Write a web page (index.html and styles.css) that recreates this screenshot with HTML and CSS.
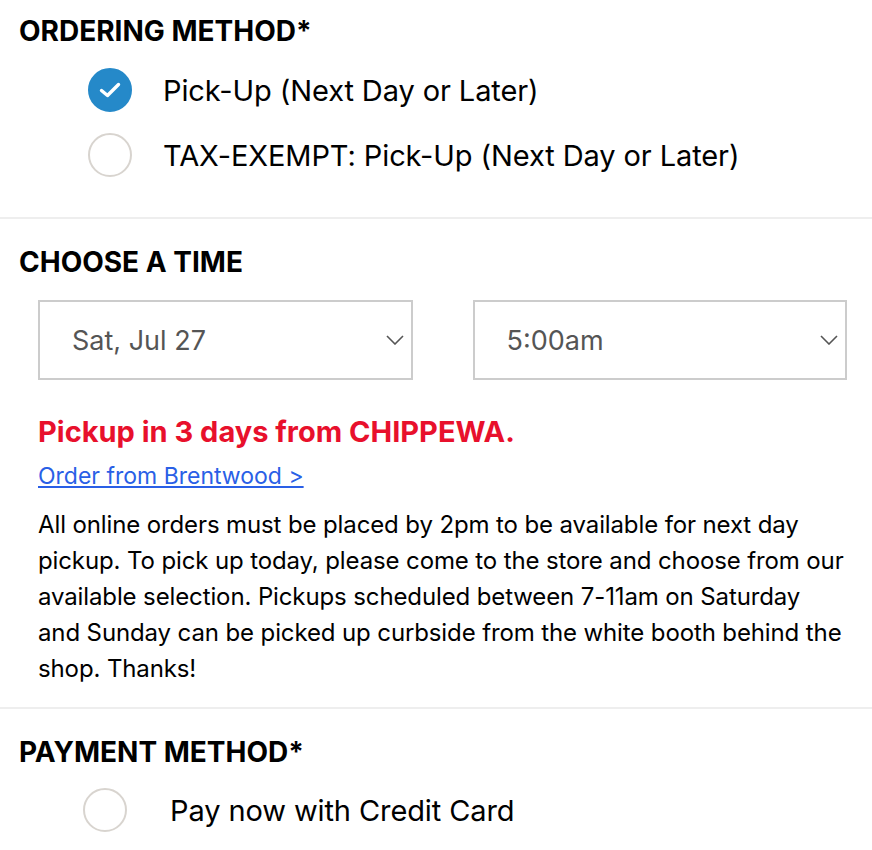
FILE: index.html
```html
<!DOCTYPE html>
<html lang="en">
<head>
    <meta charset="UTF-8">
    <meta name="viewport" content="width=device-width, initial-scale=1.0">
    <title>Checkout</title>
    <link rel="stylesheet" href="styles.css">
</head>
<body>
    <!-- طريقة الطلب -->
    <section class="block first">
        <h2 class="block-title">ORDERING METHOD*</h2>
        <div class="options">
            <label class="option">
                <span class="radio checked">
                    <svg width="22" height="16" viewBox="0 0 22 16"><path d="M2.5 8.5 L8.5 13.5 L19.5 2.5" fill="none" stroke="#fff" stroke-width="3.4" stroke-linecap="round" stroke-linejoin="round"/></svg>
                </span>
                <span class="option-text">Pick-Up (Next Day or Later)</span>
            </label>
            <label class="option">
                <span class="radio"></span>
                <span class="option-text">TAX-EXEMPT: Pick-Up (Next Day or Later)</span>
            </label>
        </div>
    </section>

    <section class="block">
        <h2 class="block-title">CHOOSE A TIME</h2>
        <div class="selects">
            <div class="select">
                <span>Sat, Jul 27</span>
                <svg class="chev" width="18" height="10" viewBox="0 0 18 10"><path d="M1 1 L9 9 L17 1" fill="none" stroke="#555" stroke-width="1.6"/></svg>
            </div>
            <div class="select">
                <span>5:00am</span>
                <svg class="chev" width="18" height="10" viewBox="0 0 18 10"><path d="M1 1 L9 9 L17 1" fill="none" stroke="#555" stroke-width="1.6"/></svg>
            </div>
        </div>
        <div class="pickup-info">
            <p class="pickup-alert">Pickup in 3 days from CHIPPEWA.</p>
            <a href="#" class="store-link">Order from Brentwood &gt;</a>
            <p class="pickup-note">All online orders must be placed by 2pm to be available for next day pickup. To pick up today, please come to the store and choose from our available selection. Pickups scheduled between 7-11am on Saturday and Sunday can be picked up curbside from the white booth behind the shop. Thanks!</p>
        </div>
    </section>

    <section class="block last">
        <h2 class="block-title">PAYMENT METHOD*</h2>
        <div class="options pay">
            <label class="option">
                <span class="radio"></span>
                <span class="option-text">Pay now with Credit Card</span>
            </label>
        </div>
    </section>
</body>
</html>
```

FILE: styles.css
```css
body, html {
    margin: 0;
    padding: 0;
    font-family: Inter, "Noto Sans", sans-serif;
    color: #000;
    background: #fff;
}

.block {
    padding: 28px 25px 0 19px;
    border-bottom: 2px solid #eee;
}

.block.first {
    padding-top: 16px;
}

.block.last {
    border-bottom: none;
}

.block-title {
    margin: 0;
    font-size: 28px;
    line-height: 30px;
    font-weight: 700;
}

/* خيارات الراديو */
.options {
    padding: 22px 0 40px 69px;
    display: flex;
    flex-direction: column;
    gap: 21px;
}

.option {
    display: flex;
    align-items: center;
    gap: 31px;
}

.radio {
    width: 40px;
    height: 40px;
    border: 2px solid #d8d4cf;
    border-radius: 50%;
    display: flex;
    align-items: center;
    justify-content: center;
    flex-shrink: 0;
}

.radio.checked {
    background: #2589c9;
    border-color: #2589c9;
}

.option-text {
    font-size: 29px;
    letter-spacing: -0.1px;
}

.options.pay {
    padding: 21px 0 20px 64px;
}

.options.pay .option {
    gap: 43px;
}

/* اختيار الوقت */
.selects {
    margin: 23px 0 0 19px;
    display: grid;
    grid-template-columns: 1fr 1fr;
    gap: 60px;
}

.select {
    height: 76px;
    border: 2px solid #ccc;
    display: flex;
    align-items: center;
    justify-content: space-between;
    padding: 0 7px 0 32px;
    font-size: 27px;
    color: #555;
}

.pickup-info {
    padding: 34px 0 20px 19px;
}

.pickup-alert {
    margin: 0;
    color: #e8102c;
    font-size: 29px;
    font-weight: 700;
    line-height: 36px;
}

.store-link {
    display: inline-block;
    margin-top: 11px;
    color: #2a5fe6;
    font-size: 23px;
    line-height: 30px;
}

.pickup-note {
    margin: 16px 0 0;
    font-size: 24px;
    line-height: 36px;
    letter-spacing: -0.12px;
}
```
